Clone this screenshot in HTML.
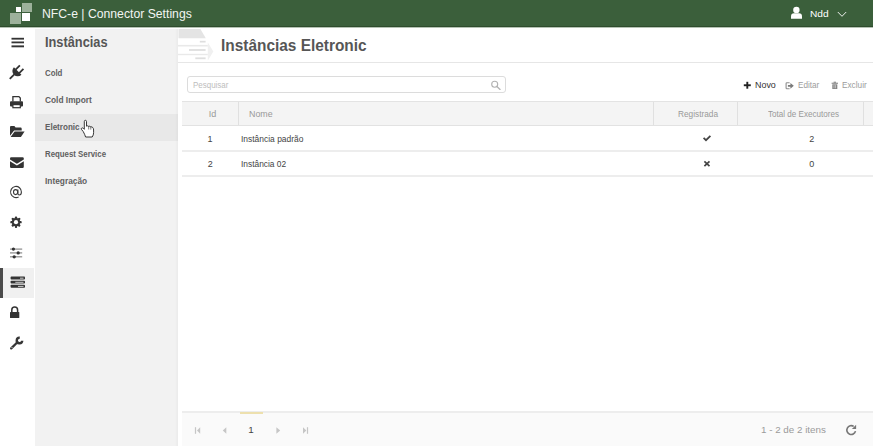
<!DOCTYPE html>
<html><head><meta charset="utf-8">
<style>
*{margin:0;padding:0;box-sizing:border-box}
html,body{width:873px;height:446px;overflow:hidden;background:#fff;font-family:"Liberation Sans",sans-serif}
.abs{position:absolute}
.t{position:absolute;white-space:pre;line-height:1;transform-origin:0 0}
#hdr{position:absolute;left:0;top:0;width:873px;height:27px;background:#3b5f3b;border-bottom:1px solid #2e4c2d}
#iconcol{position:absolute;left:0;top:28px;width:35px;height:418px;background:#fff}
#panel{position:absolute;left:35px;top:29px;width:143px;height:417px;background:#f2f2f2}
#hover{position:absolute;left:35px;top:114px;width:143px;height:27px;background:#e8e8e8}
#active{position:absolute;left:0;top:268px;width:34px;height:30px;background:#f0f0f0;border-left:3px solid #4a4a4a}
svg{position:absolute;overflow:visible;z-index:5}
.t{z-index:6}
</style></head><body>
<div id="hdr"></div>
<div class="abs" style="left:0;top:27px;width:873px;height:1px;background:#b4c2b3"></div>
<div class="abs" style="left:0;top:28px;width:873px;height:1px;background:#fff;z-index:7"></div>
<!-- logo -->
<div class="abs" style="left:16px;top:7px;width:5px;height:5px;background:#fff"></div>
<div class="abs" style="left:22px;top:3px;width:10px;height:9px;background:#9db19b"></div>
<div class="abs" style="left:10px;top:13px;width:11px;height:11px;background:#9db19b"></div>
<div class="abs" style="left:22px;top:13px;width:8px;height:8px;background:#fff"></div>

<div id="iconcol"></div>
<div id="panel"></div>
<div id="hover"></div>
<div class="abs" style="left:175px;top:28px;width:3px;height:418px;background:linear-gradient(90deg,rgba(0,0,0,0),rgba(0,0,0,0.03))"></div>
<div id="active"></div>


<!-- left icons -->
<svg style="left:0;top:0" width="873" height="446" viewBox="0 0 873 446">
 <g fill="#333">
  <rect x="11.5" y="37.8" width="12.5" height="1.8"/>
  <rect x="11.5" y="41.5" width="12.5" height="1.8"/>
  <rect x="11.5" y="45.4" width="12.5" height="1.9"/>
 </g>
 <!-- plug -->
 <g transform="translate(17.7,71) rotate(45)" fill="#333">
  <path d="M-5.3,0 H5.3 A5.3,5.3 0 0 1 -5.3,0 Z"/>
  <rect x="-3.4" y="-5.6" width="1.8" height="6"/>
  <rect x="1.6" y="-5.6" width="1.8" height="6"/>
  <rect x="-0.9" y="3" width="1.8" height="8.2"/>
 </g>
 <!-- printer -->
 <path d="M12.9,101.5 V96.6 H18.9 L20.3,98 V101.5" fill="none" stroke="#333" stroke-width="1.3"/>
 <rect x="10" y="101.3" width="13" height="5.2" rx="1" fill="#333"/>
 <rect x="12.9" y="104.6" width="7.4" height="3.1" fill="#fff" stroke="#333" stroke-width="1.2"/>
 <!-- folder open -->
 <path d="M10,127 Q10,126 11,126 H14.4 L15.6,127.6 H20.6 Q21.7,127.6 21.7,128.7 V130.4 H14.1 L10,135.8 Z" fill="#333"/>
 <path d="M14.6,131.4 H24.6 L20.9,136.9 H10.6 Z" fill="#333"/>
 <!-- envelope -->
 <path d="M10,158.5 Q10,157.3 11.2,157.3 H22.6 Q23.8,157.3 23.8,158.5 V159.5 L16.9,163.8 L10,159.5 Z" fill="#333"/>
 <path d="M10,161.2 L16.9,165.6 L23.8,161.2 V166.8 Q23.8,168 22.6,168 H11.2 Q10,168 10,166.8 Z" fill="#333"/>
 <!-- at -->
 <ellipse cx="15.6" cy="192.1" rx="2.1" ry="2.5" fill="none" stroke="#3a3a3a" stroke-width="1.1"/>
 <path d="M17.9,189.6 V193.4 Q17.9,195 19.3,195 Q21.4,195 21.4,192 A5.4,5.6 0 1 0 18.6,196.9" fill="none" stroke="#3a3a3a" stroke-width="1.1"/>
 <!-- gear -->
 <g transform="translate(16,222.2)" fill="#363636">
  <circle r="4.1"/>
  <rect x="-1.15" y="-5.7" width="2.3" height="11.4" rx="0.9"/>
  <rect x="-1.15" y="-5.7" width="2.3" height="11.4" rx="0.9" transform="rotate(45)"/>
  <rect x="-1.15" y="-5.7" width="2.3" height="11.4" rx="0.9" transform="rotate(90)"/>
  <rect x="-1.15" y="-5.7" width="2.3" height="11.4" rx="0.9" transform="rotate(135)"/>
  <circle r="2.1" fill="#fff"/>
 </g>
 <!-- sliders -->
 <g fill="#8a8a8a">
  <rect x="10" y="248.5" width="12.2" height="1.2"/>
  <rect x="10" y="252.3" width="12.2" height="1.2"/>
  <rect x="10" y="256.2" width="12.2" height="1.2"/>
 </g>
 <g fill="#333">
  <circle cx="13.4" cy="249.1" r="1.65"/>
  <circle cx="18.2" cy="252.9" r="1.65"/>
  <circle cx="14.2" cy="256.8" r="1.65"/>
 </g>
 <!-- server / tasks -->
 <g fill="#333">
  <rect x="10.6" y="276.6" width="14.4" height="3" rx="0.8"/>
  <rect x="10.6" y="280.8" width="14.4" height="2.8" rx="0.8"/>
  <rect x="10.6" y="284.8" width="14.4" height="3" rx="0.8"/>
 </g>
 <g fill="#ddd">
  <rect x="20" y="277.7" width="3.5" height="0.9"/>
  <rect x="15.3" y="281.8" width="8.2" height="0.9"/>
  <rect x="18" y="285.9" width="5.5" height="0.9"/>
 </g>
 <!-- lock -->
 <path d="M11.8,312.3 V310 A2.9,3 0 0 1 17.6,310 V312.3" fill="none" stroke="#333" stroke-width="1.5"/>
 <rect x="10" y="312" width="9.3" height="6" rx="0.6" fill="#333"/>
 <!-- wrench -->
 <path d="M11.2,348.4 L17.4,342.3" stroke="#363636" stroke-width="2.3" stroke-linecap="round"/>
 <path d="M22.24,340.74 A2.75,2.75 0 1 1 19.74,337.76" fill="none" stroke="#363636" stroke-width="2.4"/>
 <circle cx="12" cy="347.6" r="0.5" fill="#fff"/>
 <!-- cursor hand -->
 <path d="M83.2,131.5 L81.6,129.6 Q80.8,128.6 81.8,128 Q82.6,127.6 83.4,128.4 L84.3,129.3 V121.6 Q84.3,120.3 85.4,120.3 Q86.5,120.3 86.5,121.6 V126.2 Q87.6,125.4 88.7,126.4 Q89.8,125.8 90.8,126.9 Q92,126.5 92.8,127.6 Q93.6,128.4 93.6,130 V132.6 Q93.6,135 92.2,137 H85.6 Q84.8,134.4 83.2,131.5 Z" fill="#fff" stroke="#222" stroke-width="0.9" stroke-linejoin="round"/>
 <path d="M88.7,126.4 V129.5 M90.8,126.9 V129.6" stroke="#222" stroke-width="0.6"/>
</svg>

<!-- sidebar text -->


<svg style="left:0;top:0" width="873" height="446" viewBox="0 0 873 446">
 <!-- user -->
 <circle cx="796.4" cy="9.9" r="3.2" fill="#fff"/>
 <path d="M791,18.8 V16.2 Q791,13.2 794,13.2 H799 Q802,13.2 802,16.2 V18.8 Z" fill="#fff"/>
 <path d="M837.8,12 L842,16.3 L846.2,12" fill="none" stroke="#fff" stroke-width="0.9"/>
 <!-- search icon -->
 <circle cx="494.7" cy="84.2" r="3" fill="none" stroke="#b2b2b2" stroke-width="1.1"/>
 <path d="M496.9,86.5 L500.1,89.4" stroke="#b2b2b2" stroke-width="1.3" stroke-linecap="round"/>
 <!-- plus -->
 <rect x="743.8" y="84.3" width="7" height="1.9" fill="#222"/>
 <rect x="746.35" y="81.8" width="1.9" height="6.9" fill="#222"/>
 <!-- edit (sign-out style) -->
 <path d="M789.6,82.7 H786.9 Q786.1,82.7 786.1,83.5 V88 Q786.1,88.8 786.9,88.8 H789.6" fill="none" stroke="#8e8e8e" stroke-width="1.1"/>
 <path d="M787.9,84.9 H790.4 V82.9 L793.8,85.8 L790.4,88.7 V86.7 H787.9 Z" fill="#7a7a7a"/>
 <!-- trash -->
 <rect x="831.6" y="82.7" width="6.4" height="1.1" fill="#858585"/>
 <rect x="833.6" y="81.7" width="2.4" height="1.1" fill="#858585"/>
 <rect x="832.3" y="84.3" width="5" height="4.7" fill="#858585"/>
 <rect x="833.7" y="85.1" width="0.6" height="3.1" fill="#ddd"/>
 <rect x="835.3" y="85.1" width="0.6" height="3.1" fill="#ddd"/>
 <!-- check -->
 <path d="M703.6,137.9 L706,140.2 L710.4,135.9" fill="none" stroke="#444" stroke-width="1.75"/>
 <!-- x -->
 <path d="M704.4,161.3 L709.5,166.1 M709.5,161.3 L704.4,166.1" fill="none" stroke="#444" stroke-width="1.7"/>
 <!-- pager -->
 <g fill="#c6c6c6">
  <rect x="194.9" y="427.2" width="1.2" height="6.6"/>
  <path d="M200.2,427.3 V433.8 L197,430.55 Z"/>
  <path d="M226.3,427.3 V433.8 L222.8,430.55 Z"/>
  <path d="M276.4,427.2 V433.8 L280.2,430.5 Z"/>
  <path d="M303,427.3 V433.8 L306.3,430.55 Z"/>
  <rect x="306.9" y="427.2" width="1.2" height="6.6"/>
 </g>
 <!-- refresh -->
 <path d="M855.5,431.1 A4.4,4.4 0 1 1 853.7,426.4" fill="none" stroke="#777" stroke-width="1.6"/>
 <path d="M856.1,424.7 V428.9 H851.9 Z" fill="#777"/>
</svg>
<!-- decorative arrow -->
<svg style="left:0;top:0" width="873" height="446" viewBox="0 0 873 446">
 <path d="M178.5,29 H200.4 L205.8,38.2 H178.5 Z" fill="#e4e4e4"/>
 <path d="M207.8,42.6 L213.4,51.6 L207.8,60.5 Z" fill="#f0f0f0"/>
 <rect x="178" y="44.9" width="29.8" height="1.6" fill="#e9e9e9"/>
 <rect x="178" y="53.8" width="29.8" height="1.4" fill="#e9e9e9"/>
 <rect x="199.8" y="40.8" width="5.8" height="1.7" fill="#dedede"/>
 <rect x="189" y="49.1" width="16.6" height="1.8" fill="#dedede"/>
 <rect x="195.3" y="57.4" width="10.3" height="1.8" fill="#dedede"/>
</svg>

<!-- main title -->
<div class="abs" style="left:178px;top:62px;width:695px;height:1px;background:#e6e6e6"></div>

<!-- search -->
<div class="abs" style="left:187px;top:76px;width:319px;height:17px;border:1px solid #dcdcdc;border-radius:3px;background:#fff"></div>

<!-- toolbar -->

<!-- table -->
<div class="abs" style="left:182px;top:101px;width:691px;height:25px;background:#f4f4f4;border-top:1px solid #e3e3e3;border-bottom:1px solid #e2e2e2"></div>
<div class="abs" style="left:238px;top:102px;width:1px;height:23px;background:#e0e0e0"></div>
<div class="abs" style="left:653px;top:102px;width:1px;height:23px;background:#e0e0e0"></div>
<div class="abs" style="left:737px;top:102px;width:1px;height:23px;background:#e0e0e0"></div>
<div class="abs" style="left:863px;top:102px;width:1px;height:23px;background:#e0e0e0"></div>

<div class="abs" style="left:182px;top:150px;width:691px;height:2px;background:#ededed"></div>
<div class="abs" style="left:182px;top:175px;width:691px;height:2px;background:#ededed"></div>

<!-- footer -->
<div class="abs" style="left:182px;top:411px;width:691px;height:35px;background:#fafafa;border-top:2px solid #ededed"></div>
<div class="abs" style="left:240px;top:412px;width:23px;height:2px;background:#ede0ae"></div>

<div class="t" style="left:41.72px;top:7.85px;font-size:12.5px;font-weight:400;color:#f2f5f2;transform:scaleX(0.9770)">NFC-e | Connector Settings</div>
<div class="t" style="left:44.69px;top:34.95px;font-size:14px;font-weight:700;color:#565656;transform:scaleX(0.9134)">Instâncias</div>
<div class="t" style="left:44.50px;top:68.50px;font-size:9px;font-weight:700;color:#606060;transform:scaleX(0.8700)">Cold</div>
<div class="t" style="left:44.50px;top:95.90px;font-size:9px;font-weight:700;color:#606060;transform:scaleX(0.9260)">Cold Import</div>
<div class="t" style="left:44.70px;top:123.10px;font-size:9px;font-weight:700;color:#606060;transform:scaleX(0.8973)">Eletronic</div>
<div class="t" style="left:44.93px;top:150.40px;font-size:9px;font-weight:700;color:#606060;transform:scaleX(0.8710)">Request Service</div>
<div class="t" style="left:45.38px;top:176.70px;font-size:9px;font-weight:700;color:#606060;transform:scaleX(0.9250)">Integração</div>
<div class="t" style="left:220.74px;top:38.00px;font-size:16px;font-weight:700;color:#565656;transform:scaleX(0.9633)">Instâncias Eletronic</div>
<div class="t" style="left:192.62px;top:80.60px;font-size:9px;font-weight:400;color:#bdbdbd;transform:scaleX(0.8846)">Pesquisar</div>
<div class="t" style="left:754.66px;top:80.20px;font-size:9.5px;font-weight:400;color:#333;transform:scaleX(0.9381)">Novo</div>
<div class="t" style="left:798.14px;top:80.20px;font-size:9.5px;font-weight:400;color:#9c9c9c;transform:scaleX(0.8583)">Editar</div>
<div class="t" style="left:841.63px;top:80.20px;font-size:9.5px;font-weight:400;color:#9c9c9c;transform:scaleX(0.8667)">Excluir</div>
<div class="t" style="left:208.85px;top:110.00px;font-size:9px;font-weight:400;color:#999;transform:scaleX(1.0000)">Id</div>
<div class="t" style="left:248.62px;top:110.00px;font-size:9px;font-weight:400;color:#999;transform:scaleX(0.9826)">Nome</div>
<div class="t" style="left:678.08px;top:110.00px;font-size:9px;font-weight:400;color:#999;transform:scaleX(0.9190)">Registrada</div>
<div class="t" style="left:767.90px;top:110.00px;font-size:9px;font-weight:400;color:#999;transform:scaleX(0.8987)">Total de Executores</div>
<div class="t" style="left:207.50px;top:134.50px;font-size:9px;font-weight:400;color:#444;transform:scaleX(1.0000)">1</div>
<div class="t" style="left:240.76px;top:134.50px;font-size:9px;font-weight:400;color:#444;transform:scaleX(0.9385)">Instância padrão</div>
<div class="t" style="left:809.15px;top:134.50px;font-size:9px;font-weight:400;color:#444;transform:scaleX(1.0000)">2</div>
<div class="t" style="left:207.65px;top:159.60px;font-size:9px;font-weight:400;color:#444;transform:scaleX(1.0000)">2</div>
<div class="t" style="left:240.77px;top:159.60px;font-size:9px;font-weight:400;color:#444;transform:scaleX(0.9298)">Instância 02</div>
<div class="t" style="left:809.15px;top:159.60px;font-size:9px;font-weight:400;color:#444;transform:scaleX(1.0000)">0</div>
<div class="t" style="left:248.25px;top:424.70px;font-size:9.8px;font-weight:400;color:#444;transform:scaleX(1.0000)">1</div>
<div class="t" style="left:760.90px;top:424.70px;font-size:9.8px;font-weight:400;color:#9a9a9a;transform:scaleX(1.0016)">1 - 2 de 2 itens</div>
<div class="t" style="left:810.07px;top:10.20px;font-size:9px;font-weight:400;color:#fff;transform:scaleX(1.1267)">Ndd</div>
</body></html>
